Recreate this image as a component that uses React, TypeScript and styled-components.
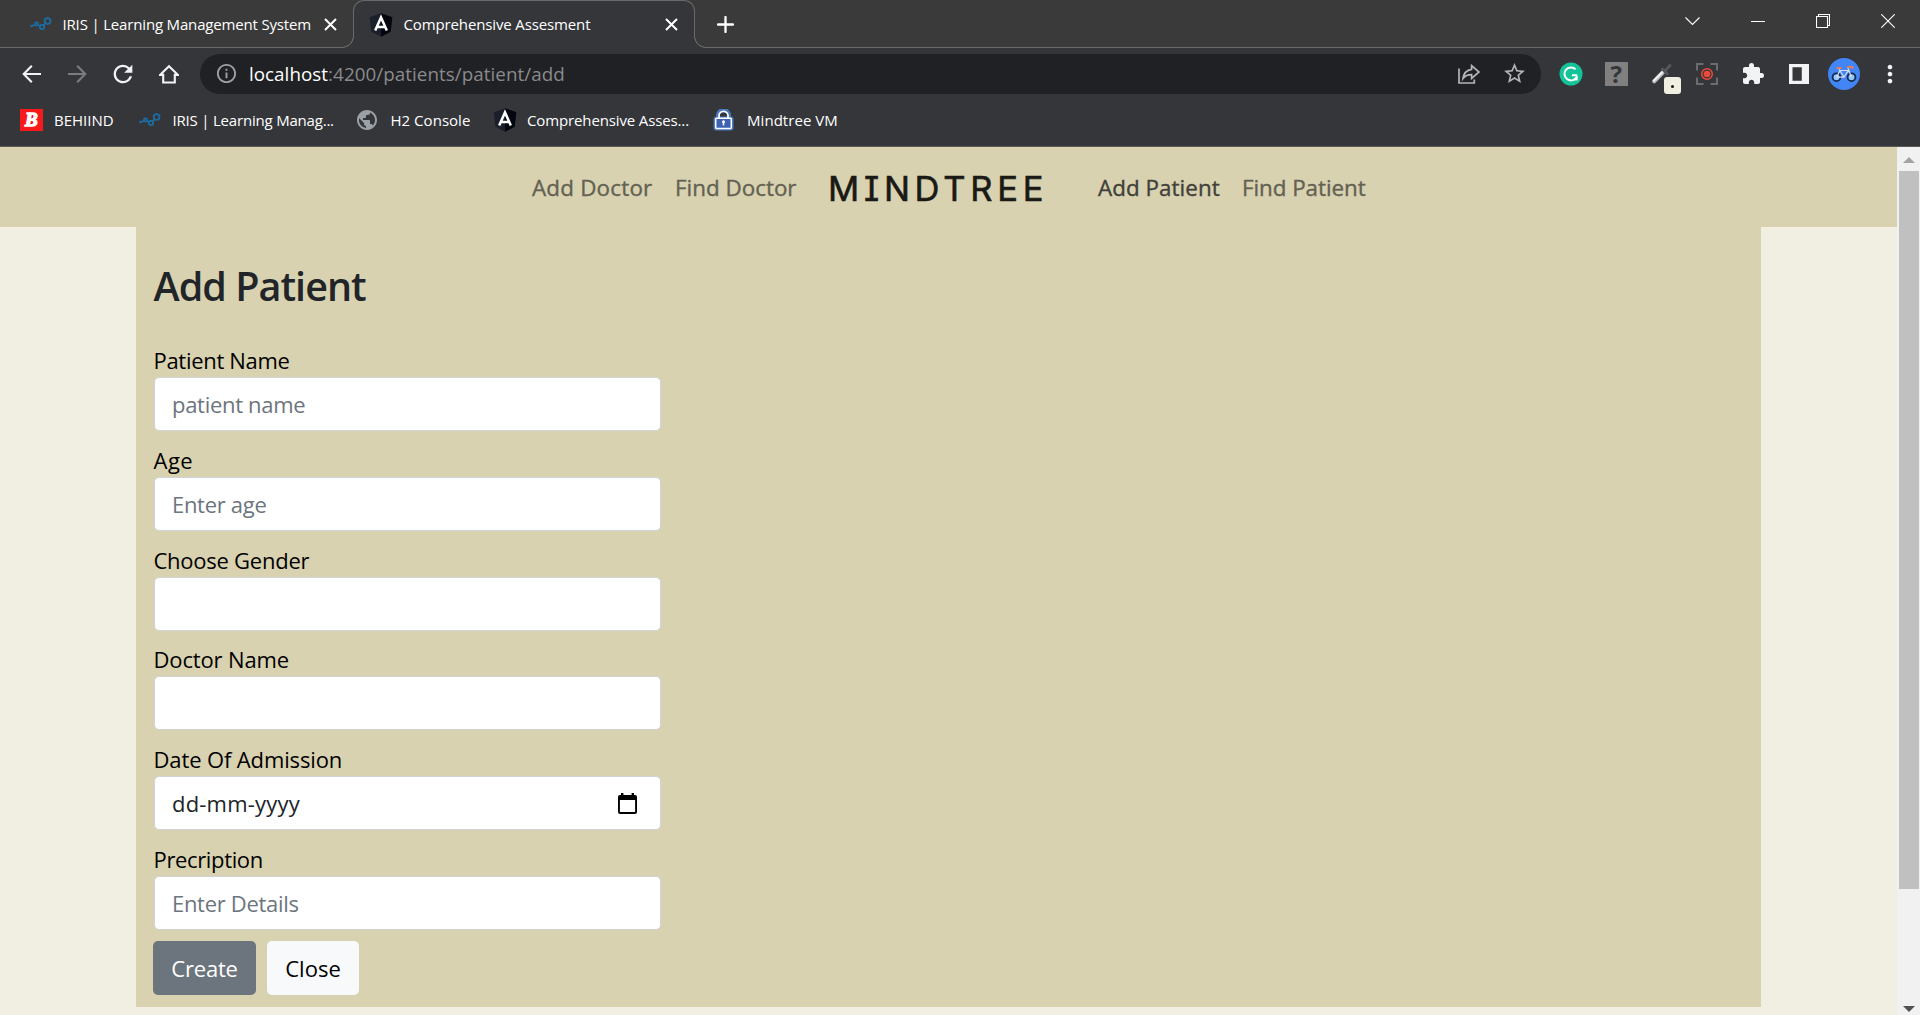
import React from "react";
import styled, { createGlobalStyle, css } from "styled-components";
import { MdExtension, MdMoreVert, MdOutlineInfo, MdPublic, MdRefresh, MdStarBorder } from "react-icons/md";

const color = {
  strip: "#3a3a3a",
  toolbar: "#35363a",
  outline: "#686868",
  field: "#202124",
  tan: "#d8d2b0",
  cream: "#f1eee2",
  text: "#212529",
};

const GlobalStyle = createGlobalStyle`
  *, *::before, *::after { box-sizing: border-box; }
  body {
    margin: 0;
    overflow: hidden;
    font-family: "Open Sans", "Noto Sans", sans-serif;
    background: ${color.cream};
  }
  svg { display: block; flex: none; }
`;

const Window = styled.div`
  width: 1920px;
  height: 1015px;
  display: flex;
  flex-direction: column;
  overflow: hidden;
`;

/* ---------- browser chrome ---------- */

const TabStrip = styled.div`
  height: 48px;
  flex: none;
  display: flex;
  background: linear-gradient(${color.strip} 47px, ${color.outline} 47px);
  color: #fff;
`;

const tabBase = css`
  height: 48px;
  display: flex;
  align-items: center;
`;

const InactiveTab = styled.div`
  ${tabBase}
  width: 353px;
  padding: 0 16px 0 30px;
`;

const ActiveTab = styled.div`
  ${tabBase}
  position: relative;
  width: 342px;
  padding: 0 16px 0 15px;
  background: ${color.toolbar};
  border: 1px solid ${color.outline};
  border-bottom: none;
  border-radius: 11px 11px 0 0;

  &::before,
  &::after {
    content: "";
    position: absolute;
    bottom: 0;
    width: 12px;
    height: 12px;
  }
  &::before {
    left: -12px;
    background: radial-gradient(circle at 0 0, ${color.strip} 10.6px, ${color.outline} 11px 11.6px, ${color.toolbar} 12.2px);
  }
  &::after {
    right: -12px;
    background: radial-gradient(circle at 100% 0, ${color.strip} 10.6px, ${color.outline} 11px 11.6px, ${color.toolbar} 12.2px);
  }
`;

const ChromeText = styled.span<{ $spacing?: number }>`
  font-size: 15px;
  line-height: 20px;
  letter-spacing: ${(p) => p.$spacing ?? -0.13}px;
  white-space: nowrap;
  color: #fff;
`;

const TabTitle = styled(ChromeText)`
  flex: 1;
  margin-left: 10.5px;
  padding-bottom: 1px;
`;

const NewTab = styled.div`
  ${tabBase}
  margin-left: 22px;
  flex: 1;
`;

const WindowControls = styled.div`
  display: flex;
  height: 42px;
  margin-right: -1px;
`;

const WindowButton = styled.div`
  width: 65.3px;
  display: flex;
  align-items: center;
  justify-content: center;
`;

const Toolbar = styled.div`
  height: 53px;
  flex: none;
  display: flex;
  align-items: center;
  background: ${color.toolbar};
  padding: 0 7.5px 2px 9px;
`;

const Slot = styled.div`
  width: 45.6px;
  height: 48px;
  flex: none;
  display: flex;
  align-items: center;
  justify-content: center;
  position: relative;
`;

const AddressBar = styled.div`
  flex: 1;
  height: 40px;
  margin: 0 7px 0 8.5px;
  padding: 0 3px 0 15px;
  border-radius: 20px;
  background: ${color.field};
  display: flex;
  align-items: center;
  color: #9aa0a6;
`;

const Url = styled.div`
  flex: 1;
  margin-left: 11px;
  padding-top: 1px;
  font-size: 18.8px;
  line-height: 24px;
  letter-spacing: 0.06px;
  color: #8a8b8d;

  b {
    font-weight: 400;
    color: #fff;
  }
`;

const Swatch = styled.div`
  position: absolute;
  left: 25px;
  top: 27px;
  width: 17px;
  height: 17px;
  border-radius: 3px;
  background: ${color.cream};
  display: flex;
  align-items: center;
  justify-content: center;

  &::after {
    content: "";
    width: 3px;
    height: 3px;
    margin-top: 3px;
    border-radius: 50%;
    background: #111;
  }
`;

const Avatar = styled.div`
  width: 32px;
  height: 32px;
  border-radius: 50%;
  background: #4285f4;
  display: flex;
  align-items: center;
  justify-content: center;
`;

const Unknown = styled.div`
  width: 23px;
  height: 24px;
  background: #808080;
  color: #35363a;
  font: 700 24px/23px "Open Sans", sans-serif;
  text-align: center;
`;

const Bookmarks = styled.div`
  height: 46px;
  flex: none;
  display: flex;
  align-items: center;
  padding: 0 0 8px 20px;
  background: ${color.toolbar};
  border-bottom: 1px solid #5c5a55;
`;

const Bookmark = styled.div<{ $width: number }>`
  width: ${(p) => p.$width}px;
  display: flex;
  align-items: center;
`;

const BookmarkIcon = styled.div`
  width: 34px;
  flex: none;
`;

/* ---------- page ---------- */

const Viewport = styled.div`
  flex: 1;
  min-height: 0;
  display: flex;
`;

const Page = styled.div`
  width: 1897px;
  background: ${color.cream};
`;

const Nav = styled.nav`
  height: 80px;
  display: flex;
  align-items: center;
  padding: 2px 0 0 532px;
  background: ${color.tan};
`;

const NavLink = styled.a<{ $width: number; $active?: boolean; $spacing?: number }>`
  width: ${(p) => p.$width}px;
  font-size: 22.4px;
  font-weight: 500;
  line-height: 32px;
  letter-spacing: ${(p) => p.$spacing ?? 0.05}px;
  white-space: nowrap;
  color: ${(p) => (p.$active ? "#41403a" : "#636152")};
  -webkit-text-stroke: 0.35px currentColor;
`;

const Brand = styled.div`
  width: 271px;
  padding: 1px 0 0 1px;
  font-family: Inter, "DejaVu Sans Mono", sans-serif;
  font-size: 34.5px;
  line-height: 40px;
  font-feature-settings: "cv08" 1;
  letter-spacing: 4.75px;
  white-space: nowrap;
  color: #191915;
  -webkit-text-stroke: 0.6px currentColor;
`;

const Panel = styled.main`
  width: 1625px;
  height: 780px;
  margin-left: 136px;
  padding: 35px 17.5px 0;
  background: ${color.tan};
`;

const Title = styled.h1`
  margin: 0 0 33px;
  font-size: 39.5px;
  font-weight: 600;
  line-height: 48px;
  letter-spacing: -0.97px;
  color: ${color.text};
`;

const Field = styled.label`
  display: block;
  width: 507px;
  margin-bottom: 11.8px;
`;

const Label = styled.span<{ $spacing: number }>`
  display: block;
  font-size: 22px;
  line-height: 34px;
  letter-spacing: ${(p) => p.$spacing}px;
  color: #000;
`;

const controlBox = css`
  display: flex;
  align-items: center;
  width: 507px;
  height: 54px;
  padding: 0 17.5px;
  border: 1px solid #ced4da;
  border-radius: 5px;
  background: #fff;
  font: 400 22px/32px "Open Sans", sans-serif;
  color: ${color.text};
`;

const Input = styled.input`
  ${controlBox}
  letter-spacing: -0.3px;
  outline: none;

  &::placeholder {
    color: #6c757d;
    opacity: 1;
  }
`;

const DateInput = styled.div`
  ${controlBox}
  justify-content: space-between;
  padding-right: 22.5px;
  letter-spacing: 0.2px;
`;

const Actions = styled.div`
  display: flex;
  gap: 11px;
  margin: -1px 0 0 -0.5px;
`;

const Button = styled.button<{ $primary?: boolean }>`
  width: ${(p) => (p.$primary ? 103 : 92)}px;
  height: 54px;
  padding: 0;
  border: 0;
  border-radius: 5px;
  background: ${(p) => (p.$primary ? "#6c757d" : "#f8f9fa")};
  color: ${(p) => (p.$primary ? "#fff" : "#000")};
  font: 400 22px/32px "Open Sans", sans-serif;
  letter-spacing: ${(p) => (p.$primary ? -0.2 : 0)}px;
`;

const Scrollbar = styled.div`
  width: 23px;
  display: flex;
  flex-direction: column;
  align-items: center;
  padding: 10px 0 3px 1px;
  background: #f1f1f1;
`;

const Thumb = styled.div`
  width: 20px;
  height: 718px;
  margin: 8px 0 auto;
  background: #c0c0c0;
`;

/* ---------- drawings ---------- */

const IrisIcon = () => (
  <svg width="22" height="14" viewBox="0 0 22 14" fill="none" stroke="#1b6ea5" strokeWidth="1.7">
    <circle cx="17.6" cy="4.1" r="2.9" />
    <circle cx="12" cy="10" r="2.2" />
    <circle cx="6.5" cy="7" r="1.6" />
    <path d="M1 9.3 5 7.7M8 8l1.8 1M13.6 8.4l1.7-1.9" />
    <circle cx="1.6" cy="9" r="0.5" />
  </svg>
);

const AngularIcon = () => (
  <svg width="24" height="24" viewBox="0 0 24 24">
    <path d="M12 0.3 23.3 4.2 21.6 18.7 12 23.8 2.4 18.7 0.7 4.2Z" fill="#1b1f2b" />
    <path d="M12 0.3 23.3 4.2 21.6 18.7 12 23.8Z" fill="#03060f" />
    <path d="M6.2 17.4 12 4.4l5.8 13M8.6 13.9h6.8" fill="none" stroke="#fff" strokeWidth="2.5" />
  </svg>
);

const CloseIcon = () => (
  <svg width="13" height="13" viewBox="0 0 13 13" stroke="#fff" strokeWidth="2">
    <path d="M1 1l11 11M12 1 1 12" />
  </svg>
);

const PlusIcon = () => (
  <svg width="17" height="17" viewBox="0 0 17 17" stroke="#fff" strokeWidth="2.3" strokeLinecap="round">
    <path d="M8.5 1v15M1 8.5h15" />
  </svg>
);

const ArrowIcon = ({ forward }: { forward?: boolean }) => (
  <svg width="20" height="20" viewBox="0 0 20 20" fill="none" stroke={forward ? "#7b7c7e" : "#f1f3f4"} strokeWidth="2.1">
    {forward ? <path d="M1 10h17M10.2 1.7 18.3 10l-8.1 8.3" /> : <path d="M19 10H2M9.8 1.7 1.7 10l8.1 8.3" />}
  </svg>
);

const HomeIcon = () => (
  <svg width="20" height="20" viewBox="0 0 20 20" fill="none" stroke="#f1f3f4" strokeWidth="2.1">
    <path d="M1 10.900H4.200V18.500h11.600V10.900H19L10 2.200Z" />
  </svg>
);

const ShareIcon = () => (
  <svg width="22" height="20" viewBox="0 0 22 20" fill="none" stroke="#b4b5b8" strokeWidth="1.7">
    <path d="M1 4.5V19h15.3v-3.4" />
    <path d="M13.6 5.3V1.6L21 8l-7.4 6.4v-3.7c-3.8 0-6.6 1.2-8.6 3.8.7-5 3.7-8.5 8.6-9.2Z" />
  </svg>
);

const GrammarlyIcon = () => (
  <svg width="24" height="24" viewBox="0 0 24 24" fill="none">
    <circle cx="12" cy="12" r="11.5" fill="#15c39a" />
    <path d="M16.6 7.3A6.5 6.5 0 1 0 17.9 14.600M18.200 13.200H12.900" stroke="#fff" strokeWidth="2" />
    <path d="M14 18.3l4.6.1.1-4.9Z" fill="#fff" />
  </svg>
);

const PickerIcon = () => (
  <svg width="22" height="22" viewBox="0 0 22 22" fill="none" strokeLinecap="round">
    <path d="M3.2 18.2 12 9.2" stroke="#b9b9b9" strokeWidth="4.2" />
    <path d="M3 17.6 11.5 9" stroke="#f4f4f4" strokeWidth="2" />
    <path d="M11.5 6.2l4.6 4.6M14 8l5-5.4" stroke="#55565a" strokeWidth="3" />
  </svg>
);

const CaptureIcon = () => (
  <svg width="22" height="22" viewBox="0 0 22 22" fill="none">
    <path d="M1 7.5V1h6.5M14.5 1H21v6.5M21 14.5V21h-6.5M7.5 21H1v-6.5" stroke="#6b6c6f" strokeWidth="2" />
    <circle cx="11" cy="11" r="5.3" stroke="#ea4a3c" strokeWidth="1.5" />
    <circle cx="11" cy="11" r="3.3" fill="#ea4a3c" />
  </svg>
);

const SidePanelIcon = () => (
  <svg width="20" height="20" viewBox="0 0 20 20">
    <path d="M0 0h20v20H0ZM3.5 3.2v13.6h9.3V3.2Z" fill="#f1f3f4" fillRule="evenodd" />
  </svg>
);

const BikeIcon = () => (
  <svg width="26" height="18" viewBox="0 0 26 18" fill="none">
    <circle cx="5.5" cy="12.2" r="3.9" fill="#8cc8ff" stroke="#182848" strokeWidth="1.8" />
    <circle cx="20.5" cy="12.2" r="3.9" fill="#8cc8ff" stroke="#182848" strokeWidth="1.8" />
    <path d="M5.5 12.2 9 5.5h8.2L13 12.2H5.5M8 4l5 8M16.5 2l4 10.2" stroke="#d5dcec" strokeWidth="1.2" />
    <path d="M5.5 3h5M16 2h5.5v2" stroke="#e07a6a" strokeWidth="1.8" />
  </svg>
);

const BIcon = () => (
  <svg width="23" height="22" viewBox="0 0 23 22">
    <rect width="23" height="22" fill="#f8191c" />
    <text x="11.3" y="17.4" textAnchor="middle" fontFamily="Liberation Serif, serif" fontSize="19" fontWeight="700" fontStyle="italic" fill="#fff" stroke="#fff" strokeWidth="1.3">
      B
    </text>
  </svg>
);

const LockIcon = () => (
  <svg width="21" height="22" viewBox="0 0 21 22" fill="none">
    <path d="M5 10V6.5a5.5 5.5 0 0 1 11 0V10" stroke="#4a79bd" strokeWidth="4" />
    <rect x="0.5" y="7.5" width="20" height="14" rx="2.5" fill="#4a79bd" />
    <rect x="2.7" y="9.3" width="15.6" height="10.2" rx="1" fill="#3d63b4" stroke="#fff" strokeWidth="1.5" />
    <path d="M6 9V6.8a4.5 4.5 0 0 1 9 0V9" stroke="#fff" strokeWidth="1.7" />
    <path d="M10.5 12.2v4.3" stroke="#fff" strokeWidth="1.5" />
    <circle cx="10.5" cy="12.8" r="1.5" fill="#fff" />
  </svg>
);

const CalendarIcon = () => (
  <svg width="19" height="21" viewBox="0 0 19 21">
    <path d="M3 0h2.4v2h8.2V0H16v2h1a2 2 0 0 1 2 2v15a2 2 0 0 1-2 2H2a2 2 0 0 1-2-2V4a2 2 0 0 1 2-2h1ZM1.9 7v12h15.2V7Z" fill="#000" fillRule="evenodd" />
  </svg>
);

const thin = { fill: "none", stroke: "#fff", strokeWidth: 1.1 };

/* ---------- screen ---------- */

const fields = [
  { label: "Patient Name", placeholder: "patient name", spacing: -0.3 },
  { label: "Age", placeholder: "Enter age", spacing: 0.5 },
  { label: "Choose Gender", spacing: -0.25 },
  { label: "Doctor Name", spacing: -0.15 },
  { label: "Date Of Admission", date: true, spacing: -0.13 },
  { label: "Precription", placeholder: "Enter Details", spacing: -0.35 },
];

const bookmarks = [
  { icon: <BIcon />, label: "BEHIIND", width: 118.5, spacing: 0 },
  { icon: <IrisIcon />, label: "IRIS | Learning Manag...", width: 218, spacing: -0.2 },
  { icon: <MdPublic size={24} color="#9aa0a6" style={{ marginLeft: -2 }} />, label: "H2 Console", width: 136.5, spacing: 0.03 },
  { icon: <AngularIcon />, label: "Comprehensive Asses...", width: 220, spacing: -0.13 },
  { icon: <LockIcon />, label: "Mindtree VM", width: 130, spacing: 0.05 },
];

export default function App() {
  return (
    <Window>
      <GlobalStyle />
      <TabStrip>
        <InactiveTab>
          <IrisIcon />
          <TabTitle $spacing={-0.17}>IRIS | Learning Management System</TabTitle>
          <CloseIcon />
        </InactiveTab>
        <ActiveTab>
          <AngularIcon />
          <TabTitle>Comprehensive Assesment</TabTitle>
          <CloseIcon />
        </ActiveTab>
        <NewTab>
          <PlusIcon />
        </NewTab>
        <WindowControls>
          <WindowButton>
            <svg width="15" height="9" viewBox="0 0 15 9" {...thin}><path d="M.5.5l7 7 7-7" /></svg>
          </WindowButton>
          <WindowButton>
            <svg width="14" height="1" viewBox="0 0 14 1"><rect width="14" height="1" fill="#fff" /></svg>
          </WindowButton>
          <WindowButton>
            <svg width="14" height="14" viewBox="0 0 14 14" {...thin}><path d="M.5 2.5h11v11H.5ZM2.5 2.5v-2h11v11h-2" /></svg>
          </WindowButton>
          <WindowButton>
            <svg width="14" height="14" viewBox="0 0 14 14" {...thin}><path d="M.3.3l13.4 13.4M13.7.3.3 13.7" /></svg>
          </WindowButton>
        </WindowControls>
      </TabStrip>

      <Toolbar>
        <Slot><ArrowIcon /></Slot>
        <Slot><ArrowIcon forward /></Slot>
        <Slot><MdRefresh size={28} color="#f1f3f4" /></Slot>
        <Slot><HomeIcon /></Slot>
        <AddressBar>
          <MdOutlineInfo size={23} />
          <Url><b>localhost</b>:4200/patients/patient/add</Url>
          <Slot><ShareIcon /></Slot>
          <Slot><MdStarBorder size={25} color="#b4b5b8" /></Slot>
        </AddressBar>
        <Slot><GrammarlyIcon /></Slot>
        <Slot><Unknown>?</Unknown></Slot>
        <Slot><PickerIcon /><Swatch /></Slot>
        <Slot><CaptureIcon /></Slot>
        <Slot><MdExtension size={24} color="#f1f3f4" /></Slot>
        <Slot><SidePanelIcon /></Slot>
        <Slot><Avatar><BikeIcon /></Avatar></Slot>
        <Slot><MdMoreVert size={28} color="#f1f3f4" /></Slot>
      </Toolbar>

      <Bookmarks>
        {bookmarks.map((b) => (
          <Bookmark key={b.label} $width={b.width}>
            <BookmarkIcon>{b.icon}</BookmarkIcon>
            <ChromeText $spacing={b.spacing}>{b.label}</ChromeText>
          </Bookmark>
        ))}
      </Bookmarks>

      <Viewport>
        <Page>
          <Nav>
            <NavLink $width={143} $spacing={0.2}>Add Doctor</NavLink>
            <NavLink $width={152} $spacing={0}>Find Doctor</NavLink>
            <Brand>MINDTREE</Brand>
            <NavLink $width={144} $active>Add Patient</NavLink>
            <NavLink $width={126} $spacing={-0.05}>Find Patient</NavLink>
          </Nav>
          <Panel>
            <Title>Add Patient</Title>
            {fields.map((f) => (
              <Field key={f.label}>
                <Label $spacing={f.spacing}>{f.label}</Label>
                {f.date ? (
                  <DateInput>dd-mm-yyyy<CalendarIcon /></DateInput>
                ) : (
                  <Input placeholder={f.placeholder} />
                )}
              </Field>
            ))}
            <Actions>
              <Button $primary>Create</Button>
              <Button>Close</Button>
            </Actions>
          </Panel>
        </Page>
        <Scrollbar>
          <svg width="12" height="6" viewBox="0 0 12 6"><path d="M6 0l6 6H0Z" fill="#a3a3a3" /></svg>
          <Thumb />
          <svg width="12" height="6" viewBox="0 0 12 6"><path d="M0 0h12L6 6Z" fill="#505050" /></svg>
        </Scrollbar>
      </Viewport>
    </Window>
  );
}
